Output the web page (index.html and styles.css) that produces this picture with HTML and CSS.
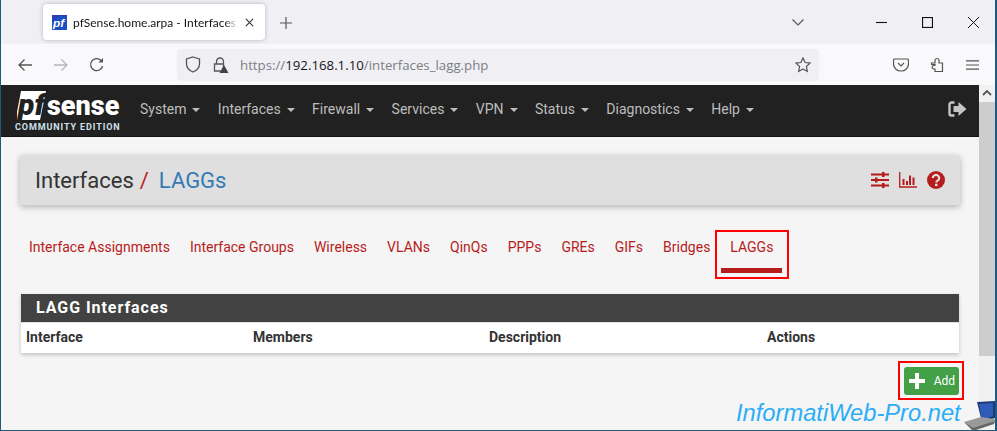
FILE: index.html
```html
<!DOCTYPE html>
<html lang="en">
<head>
<meta charset="utf-8">
<title>pfSense.home.arpa - Interfaces: LAGGs</title>
<link rel="stylesheet" href="styles.css">
</head>
<body>
<div class="window">
  <div class="tabstrip">
    <div class="tab">
      <svg class="favicon" viewBox="0 0 14 14"><rect width="14" height="14" fill="#2f3fb5"/><path d="M0 14V6L7 1h7v13z" fill="#1c4fc4"/><text x="1" y="11" class="favtext">pf</text></svg>
      <span class="tab-title">pfSense.home.arpa - Interfaces: LAGGs</span>
      <svg class="ico10" viewBox="0 0 10 10"><path d="M1 1l8 8M9 1l-8 8" stroke="#333" stroke-width="1.2" fill="none"/></svg>
    </div>
    <svg class="newtab" viewBox="0 0 12 12"><path d="M6 0v12M0 6h12" stroke="#555" stroke-width="1.2"/></svg>
    <div class="spacer"></div>
    <svg class="tablist" viewBox="0 0 12 7"><path d="M.5.5L6 6 11.500.5" stroke="#555" stroke-width="1.1" fill="none"/></svg>
    <div class="winctrls">
      <svg class="ctl" viewBox="0 0 10 10"><path d="M0 5h10" stroke="#111" stroke-width="1"/></svg>
      <svg class="ctl" viewBox="0 0 10 10"><rect x=".5" y=".5" width="9" height="9" fill="none" stroke="#111"/></svg>
      <svg class="ctl" viewBox="0 0 10 10"><path d="M0 0l10 10M10 0L0 10" stroke="#111" stroke-width=".9"/></svg>
    </div>
  </div>
  <div class="toolbar">
    <svg class="tb back" viewBox="0 0 16 16"><path d="M15 8H2M7.500 2.500L2 8l5.500 5.500" stroke="#555" stroke-width="1.300" fill="none"/></svg>
    <svg class="tb fwd" viewBox="0 0 16 16"><path d="M1 8h13M8.500 2.500L14 8l-5.500 5.500" stroke="#b5b5b8" stroke-width="1.300" fill="none"/></svg>
    <svg class="tb reload" viewBox="0 0 16 16"><path d="M13.500 9A6 6 0 1 1 12 3.500" stroke="#555" stroke-width="1.300" fill="none"/><path d="M14 1v4.500H9.500z" fill="#555"/></svg>
    <div class="urlbar">
      <svg class="shield" viewBox="0 0 16 17"><path d="M8 1l6.500 2v5c0 4-3 6.500-6.500 8-3.500-1.500-6.500-4-6.500-8V3z" stroke="#555" stroke-width="1.300" fill="none"/></svg>
      <svg class="lock" viewBox="0 0 16 16"><path d="M3.500 7V4.500a3.500 3.500 0 0 1 7 0V7M1.500 7h9v7h-9z" stroke="#555" stroke-width="1.300" fill="none"/><path d="M11 8l4.500 8h-9z" fill="#444"/></svg>
      <span class="url"><span class="dim">https://</span>192.168.1.10<span class="dim">/interfaces_lagg.php</span></span>
      <div class="spacer"></div>
      <svg class="star" viewBox="0 0 16 16"><path d="M8 1l2.100 4.500 4.900.6-3.600 3.400.9 4.900L8 12l-4.300 2.400.9-4.900L1 6.100l4.900-.6z" stroke="#555" stroke-width="1.200" fill="none"/></svg>
    </div>
    <svg class="tb pocket" viewBox="0 0 16 16"><path d="M1.500 2h13a1 1 0 0 1 1 1v4a7.500 7 0 0 1-15 0V3a1 1 0 0 1 1-1z" stroke="#555" stroke-width="1.200" fill="none"/><path d="M5 6l3 3 3-3" stroke="#555" stroke-width="1.200" fill="none"/></svg>
    <svg class="tb puzzle" viewBox="0 0 16 16"><path d="M2.500 6H6V3.500a2 2 0 0 1 4 0V6h3.500v8.500H6V12H4.500a1.800 1.800 0 0 1 0-3.500H6V7.500H2.500z" stroke="#555" stroke-width="1.200" fill="none"/></svg>
    <svg class="tb menu" viewBox="0 0 14 12"><path d="M0 1.500h14M0 6h14M0 10.500h14" stroke="#555" stroke-width="1.200"/></svg>
  </div>
  <div class="viewport">
    <div class="page">
      <nav class="navbar">
        <div class="brand">
          <svg class="logo" viewBox="0 0 108 50">
            <path d="M7 5h25l-6 29H3v-8z" fill="#fff"/>
            <text x="4" y="29" class="logo-pf">pf</text>
            <text x="33" y="29" class="logo-sense">sense</text>
            <text x="1" y="44" class="logo-ed">COMMUNITY EDITION</text>
          </svg>
        </div>
        <ul class="menu-list">
          <li>System<i class="caret"></i></li>
          <li>Interfaces<i class="caret"></i></li>
          <li>Firewall<i class="caret"></i></li>
          <li>Services<i class="caret"></i></li>
          <li>VPN<i class="caret"></i></li>
          <li>Status<i class="caret"></i></li>
          <li>Diagnostics<i class="caret"></i></li>
          <li>Help<i class="caret"></i></li>
        </ul>
        <svg class="signout" viewBox="0 0 18 16"><path d="M6 1.500H3A2 2 0 0 0 1 3.500v9a2 2 0 0 0 2 2h3" stroke="#c4c4c4" stroke-width="2.400" fill="none"/><path d="M10 1l8 7-8 7v-4H5V5h5z" fill="#c4c4c4"/></svg>
      </nav>
      <main class="content">
        <header class="pagehead">
          <h1 class="crumbs">Interfaces<span class="sep">/</span><span class="current">LAGGs</span></h1>
          <div class="head-icons">
            <svg class="hi" viewBox="0 0 18 16"><path d="M0 2.500h18M0 8h18M0 13.500h18" stroke="#b71c1c" stroke-width="2"/><path d="M11 0h2.500v5H11zM4 5.500h2.500v5H4zM11 11h2.500v5H11z" fill="#b71c1c"/></svg>
            <svg class="hi" viewBox="0 0 18 16"><path d="M.7 0v15H18" stroke="#b71c1c" stroke-width="1.300" fill="none"/><path d="M3.500 7h2v6h-2zM7 9h2v4H7zM10 3.500h2V13h-2zM13.500 5.500h2V13h-2z" fill="#b71c1c"/></svg>
            <svg class="hi" viewBox="0 0 18 18"><circle cx="9" cy="9" r="9" fill="#b71c1c"/><path d="M5.800 7a3.200 3 0 1 1 4.800 2.600c-1 .6-1.200 1-1.200 2" stroke="#dfdfdf" stroke-width="2.200" fill="none"/><rect x="8" y="12.700" width="2.500" height="2.400" fill="#dfdfdf"/></svg>
          </div>
        </header>
        <ul class="tabs">
          <li>Interface Assignments</li>
          <li>Interface Groups</li>
          <li>Wireless</li>
          <li>VLANs</li>
          <li>QinQs</li>
          <li>PPPs</li>
          <li>GREs</li>
          <li>GIFs</li>
          <li>Bridges</li>
          <li class="active">LAGGs</li>
        </ul>
        <section class="panel">
          <h2 class="panel-title">LAGG Interfaces</h2>
          <div class="cols">
            <span>Interface</span><span>Members</span><span>Description</span><span>Actions</span>
          </div>
        </section>
        <div class="actions">
          <button class="add"><svg class="plus" viewBox="0 0 16 16"><path d="M8 0v16M0 8h16" stroke="#fff" stroke-width="4"/></svg>Add</button>
        </div>
      </main>
    </div>
    <div class="scrollbar">
      <svg class="arrow" viewBox="0 0 10 6"><path d="M1 5l4-4 4 4" stroke="#555" stroke-width="1.800" fill="none"/></svg>
      <div class="thumb"></div>
    </div>
  </div>
  <div class="watermark">
    <span>InformatiWeb-Pro.net</span>
    <svg class="laptop" viewBox="0 0 31 30"><path d="M13 1l18-1v17l-13 4z" fill="#1e3a78"/><path d="M15 3l14-1v13l-11 4z" fill="#2f5cb8"/><path d="M0 21l17-5 14 2v2L9 29z" fill="#9a9a9a"/><path d="M0 21l9 6 22-7-1 3-21 7z" fill="#666"/></svg>
  </div>
</div>
</body>
</html>
```
FILE: styles.css
```css
* { box-sizing: border-box; }
html, body { margin: 0; height: 100%; overflow: hidden; }
body { font-family: Roboto, "Liberation Sans", sans-serif; background: #f5f5f5; }
ul { list-style: none; margin: 0; padding: 0; }
h1, h2 { margin: 0; font-weight: 400; }

.window {
  position: relative;
  width: 997px; height: 431px;
  display: flex; flex-direction: column;
  border-left: 1px solid #1d5a80;
  border-right: 2px solid #1d5a80;
  border-bottom: 1px solid #1d5a80;
  overflow: hidden;
}
.spacer { flex: 1; }

.tabstrip { height: 44px; background: #f0f0f4; display: flex; align-items: flex-start; padding-left: 42px; flex: none; }
.tab {
  width: 222px; height: 36px; margin-top: 4px;
  background: #fff; border-radius: 4px;
  box-shadow: 0 0 4px rgba(0,0,0,.25);
  display: flex; align-items: center; padding: 0 10px 0 9px;
}
.favicon { width: 15px; height: 15px; flex: none; }
.favtext { font: italic 700 11px "Liberation Sans", sans-serif; fill: #fff; }
.tab-title {
  margin-left: 6px; width: 165px; flex: none;
  font: 12px Lato, sans-serif; color: #15141a;
  white-space: nowrap; overflow: hidden;
  -webkit-mask-image: linear-gradient(to right, #000 92%, transparent);
  mask-image: linear-gradient(to right, #000 92%, transparent);
}
.ico10 { width: 9px; height: 9px; margin-left: 7px; flex: none; }
.newtab { width: 12px; height: 12px; margin: 17px 0 0 15px; flex: none; }
.tablist { width: 12px; height: 7px; margin: 19px 0 0; flex: none; }
.winctrls { display: flex; gap: 35px; margin: 17px 16px 0 72px; }
.ctl { width: 11px; height: 11px; flex: none; }

.toolbar { height: 41px; background: #f9f9fb; display: flex; align-items: center; flex: none; }
.tb { flex: none; }
.back { width: 16px; height: 16px; margin-left: 16px; }
.fwd { width: 16px; height: 16px; margin-left: 20px; }
.reload { width: 16px; height: 16px; margin-left: 20px; }
.urlbar {
  width: 642px; height: 32px; margin-left: 72px;
  background: #f0f0f4; border-radius: 4px;
  display: flex; align-items: center; padding: 0 8px;
}
.shield { width: 16px; height: 17px; flex: none; }
.lock { width: 16px; height: 16px; margin-left: 12px; flex: none; }
.url { margin-left: 11px; font: 13.25px "Open Sans", sans-serif; color: #15141a; white-space: nowrap; }
.dim { color: #7d7d85; }
.star { width: 16px; height: 16px; flex: none; }
.pocket { width: 16px; height: 16px; margin-left: 74px; }
.puzzle { width: 16px; height: 16px; margin-left: 20px; }
.menu { width: 13px; height: 12px; margin-left: 21px; }

.viewport { flex: 1; display: flex; min-height: 0; }
.page { flex: 1; min-width: 0; display: flex; flex-direction: column; }

.navbar { height: 52px; background: #212121; display: flex; align-items: flex-start; padding-left: 13px; flex: none; border-bottom: 1px solid #111; }
.brand { width: 108px; height: 50px; flex: none; margin-top: 1px; }
.logo { width: 108px; height: 50px; display: block; }
.logo-pf { font: italic 900 30px Roboto, sans-serif; fill: #212121; }
.logo-sense { font: 900 27px Roboto, sans-serif; fill: #fff; }
.logo-ed { font: 700 9px Roboto, sans-serif; fill: #cfe0ea; letter-spacing: .9px; }
.menu-list { display: flex; gap: 17.4px; margin: 16px 0 0 18px; font-size: 14px; color: #bdbdbd; white-space: nowrap; }
.caret { display: inline-block; margin-left: 6px; vertical-align: middle; border-top: 4px solid #bdbdbd; border-left: 4px solid transparent; border-right: 4px solid transparent; }
.signout { width: 19px; height: 16px; margin: 16px 12px 0 auto; flex: none; }

.content { flex: 1; background: #f5f5f5; padding: 18px 18px 0 19px; min-height: 0; }
.pagehead {
  height: 50px; background: #dfdfdf; border-radius: 2px;
  box-shadow: 0 2px 6px rgba(0,0,0,.28);
  display: flex; align-items: center; justify-content: space-between;
  padding: 0 15px; margin-right: 1px;
}
.crumbs { font-size: 22px; color: #333; white-space: nowrap; }
.sep { color: #b71c1c; margin: 0 10px 0 6px; }
.current { color: #337ab7; }
.head-icons { display: flex; align-items: center; gap: 10px; }
.hi { width: 18px; height: 18px; flex: none; }

.tabs { display: flex; gap: 20px; margin: 25px 0 0 9px; font-size: 14px; color: #b71c1c; white-space: nowrap; height: 49px; }
.tabs li { height: 43px; line-height: 34px; }
.tabs li.active { position: relative; width: 61px; margin-left: -9px; text-align: center; border-bottom: 5px solid #b71c1c; }
.tabs li.active::after { content: ""; position: absolute; left: -6px; right: -7px; top: 0; bottom: -11px; border: 2px solid #f00; }

.panel { margin: 15px 2px 0 1px; background: #fff; box-shadow: 0 2px 4px rgba(0,0,0,.2); }
.panel-title { height: 28px; line-height: 28px; background: #424242; color: #fff; font-size: 16px; font-weight: 700; letter-spacing: .95px; padding-left: 15px; }
.cols { height: 31px; padding: 0 0 2px 5px; display: grid; grid-template-columns: 227px 236px 278px 1fr; align-items: center; font-size: 14px; font-weight: 700; color: #333; border-top: 1px solid #e0e0e0; }

.actions { display: flex; justify-content: flex-end; margin: 14px 2px 0 0; }
.add {
  position: relative;
  width: 55px; height: 28px; border: 0; border-radius: 3px;
  background: #43a047; color: #fff; font: 400 12px Roboto, sans-serif;
  display: flex; align-items: center; justify-content: space-between; padding: 0 4px 0 5px;
}
.add::after { content: ""; position: absolute; left: -6px; right: -5px; top: -6px; bottom: -5px; border: 2px solid #f00; }
.plus { width: 16px; height: 16px; }

.scrollbar { width: 16px; flex: none; background: #f1f1f1; display: flex; flex-direction: column; align-items: center; }
.arrow { width: 10px; height: 6px; margin-top: 5px; flex: none; }
.thumb { width: 100%; height: 254px; margin-top: 6px; background: #cdcdcd; }

.watermark { position: absolute; left: 735px; top: 400px; display: flex; align-items: flex-start; font: italic 23.7px "Liberation Sans", sans-serif; color: #2badf7; white-space: nowrap; }
.laptop { width: 31px; height: 30px; margin: 1px 0 0 3px; flex: none; }
```
